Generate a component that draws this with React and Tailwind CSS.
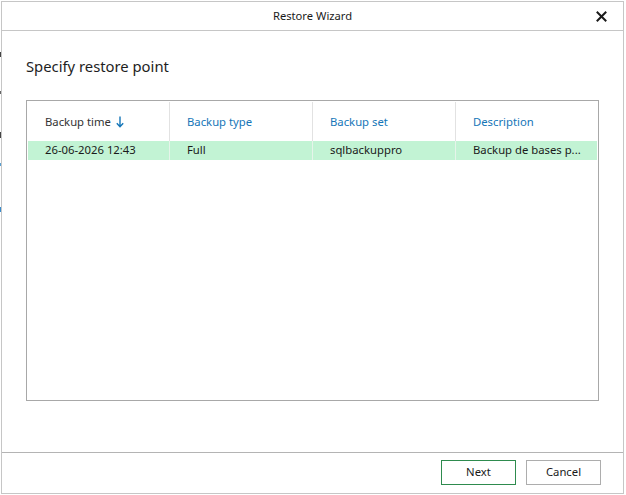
const font = { fontFamily: '"Segoe UI", "Noto Sans", "Open Sans", sans-serif' };

function CloseIcon() {
  return (
    <svg width="11" height="11" viewBox="0 0 11 11" className="block">
      <path d="M1.5 1.5 L9.5 9.5 M9.5 1.5 L1.5 9.5" stroke="#1a1a1a" strokeWidth="2" strokeLinecap="square" />
    </svg>
  );
}

function SortArrow() {
  return (
    <svg width="8" height="12" viewBox="0 0 8 12" className="inline-block ml-[5px] -mt-[2px] align-middle">
      <path d="M4 0.5 V10.5 M0.8 7.3 L4 10.8 L7.2 7.3" stroke="#1576b8" strokeWidth="1.4" fill="none" />
    </svg>
  );
}

const columns = [
  { label: 'Backup time', sorted: true },
  { label: 'Backup type' },
  { label: 'Backup set' },
  { label: 'Description' },
];

const rows = [
  ['26-06-2026 12:43', 'Full', 'sqlbackuppro', 'Backup de bases p...'],
];

export default function App() {
  return (
    <div className="relative w-[626px] h-[495px] bg-white overflow-hidden" style={font}>
      {/* bits of the window behind */}
      <div className="absolute left-0 top-[52px] w-px h-[5px] bg-[#444]" />
      <div className="absolute left-0 top-[91px] w-px h-[3px] bg-[#666]" />
      <div className="absolute left-0 top-[132px] w-px h-[6px] bg-[#444]" />
      <div className="absolute left-0 top-[163px] w-px h-[3px] bg-[#5a9fd0]" />
      <div className="absolute left-0 top-[207px] w-px h-[5px] bg-[#3a8ccc]" />

      <div className="absolute left-px top-px w-[623px] h-[493px] border border-[#c6c6c6] bg-white flex flex-col">
        {/* title bar */}
        <div className="relative h-[29px] border-b border-[#c6c6c6] flex items-center justify-center text-[11.2px] text-[#1a1a1a]">
          <span>Restore Wizard</span>
          <div className="absolute right-[16px] top-[9px]">
            <CloseIcon />
          </div>
        </div>

        {/* content */}
        <div className="flex-1 px-[24px] pt-[25px]">
          <h1 className="text-[14.8px] leading-[20px] text-[#1e1e1e]">Specify restore point</h1>

          <div className="mt-[24px] h-[301px] border border-[#a8a8a8] p-px">
            <div className="grid grid-cols-[142px_143px_143px_142px] h-[39px] items-stretch">
              {columns.map((c, i) => (
                <div
                  key={c.label}
                  className={`flex items-center pl-[17px] pt-[2px] text-[11.3px] ${i < 3 ? 'border-r border-[#e2e2e2]' : ''} ${c.sorted ? 'text-[#333333]' : 'text-[#1576b8]'}`}
                >
                  <span>{c.label}</span>
                  {c.sorted && <SortArrow />}
                </div>
              ))}
            </div>
            {rows.map((r, ri) => (
              <div key={ri} className="grid grid-cols-[142px_143px_143px_142px] h-[19px] bg-[#c2f3d4]">
                {r.map((cell, i) => (
                  <div
                    key={i}
                    className={`flex items-center pl-[17px] text-[11.3px] text-[#1a1a1a] truncate ${i < 3 ? 'border-r border-[#e6f4ea]' : ''}`}
                  >
                    {cell}
                  </div>
                ))}
              </div>
            ))}
          </div>
        </div>

        {/* footer */}
        <div className="h-[41px] border-t border-[#b4b4b4] flex items-start justify-end gap-[10px] pr-[22px] pt-[7px]">
          <button className="w-[75px] h-[25px] border border-[#2e8b4e] bg-white text-[11.3px] text-[#1a1a1a]">
            Next
          </button>
          <button className="w-[75px] h-[25px] border border-[#adadad] bg-white text-[11.3px] text-[#1a1a1a]">
            Cancel
          </button>
        </div>
      </div>
    </div>
  );
}
